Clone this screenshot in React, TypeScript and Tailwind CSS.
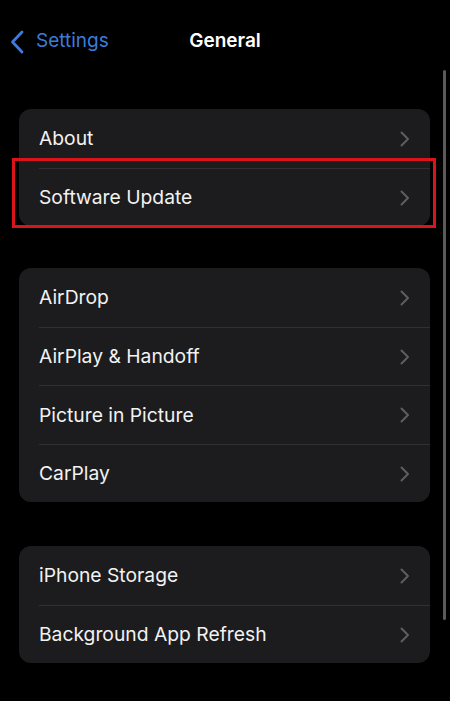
type Row = { label: string; highlight?: boolean };

const groups: Row[][] = [
  [{ label: "About" }, { label: "Software Update", highlight: true }],
  [
    { label: "AirDrop" },
    { label: "AirPlay & Handoff" },
    { label: "Picture in Picture" },
    { label: "CarPlay" },
  ],
  [{ label: "iPhone Storage" }, { label: "Background App Refresh" }],
];

function Chevron() {
  return (
    <svg width="10" height="16" viewBox="0 0 10 16" fill="none">
      <path
        d="M1.5 1.5 L8 8 L1.5 14.5"
        stroke="#5e5e62"
        strokeWidth="2"
        strokeLinecap="round"
        strokeLinejoin="round"
      />
    </svg>
  );
}

function SettingsRow({ row, first }: { row: Row; first: boolean }) {
  return (
    <div className="relative h-[58.5px] pl-5">
      {row.highlight && (
        <div className="pointer-events-none absolute -top-[10px] -bottom-[2px] -left-[7px] -right-[6px] z-10 border-[3px] border-[#d9141b]" />
      )}
      <div
        className={`flex h-full items-center pr-[20px] pt-[1px] ${
          first ? "" : "border-t border-[#303032]"
        }`}
      >
        <span className="flex-1 text-[19.3px] text-[#f2f2f2]">{row.label}</span>
        <Chevron />
      </div>
    </div>
  );
}

export default function App() {
  return (
    <div
      className="relative h-[701px] w-[450px] overflow-hidden bg-black"
      style={{ fontFamily: "Inter, 'Liberation Sans', sans-serif" }}
    >
      {/* nav bar */}
      <header className="relative flex h-[82px] items-center pt-[1px]">
        <div className="flex items-center pl-[9px] text-[#3d7bdc]">
          <svg width="17" height="24" viewBox="0 0 17 24" fill="none">
            <path
              d="M13 2 L3.5 12 L13 22"
              stroke="#3d7bdc"
              strokeWidth="2.8"
              strokeLinecap="round"
              strokeLinejoin="round"
            />
          </svg>
          <span className="ml-[10px] text-[19px]">Settings</span>
        </div>
        <h1 className="absolute left-1/2 -translate-x-1/2 text-[19px] font-semibold text-white">
          General
        </h1>
      </header>

      <main className="flex flex-col px-[19px] pt-[27px] pr-[20px]">
        {groups.map((g, gi) => (
          <section
            key={gi}
            className={`rounded-[12px] bg-[#1c1c1e] ${
              gi === 1 ? "mt-[42px]" : gi === 2 ? "mt-[44px]" : ""
            }`}
          >
            {g.map((row, ri) => (
              <SettingsRow key={row.label} row={row} first={ri === 0} />
            ))}
          </section>
        ))}
      </main>

      {/* scroll indicator */}
      <div className="absolute right-[4px] top-[70px] h-[550px] w-[3px] rounded-full bg-[#5a5a5a]" />
    </div>
  );
}
